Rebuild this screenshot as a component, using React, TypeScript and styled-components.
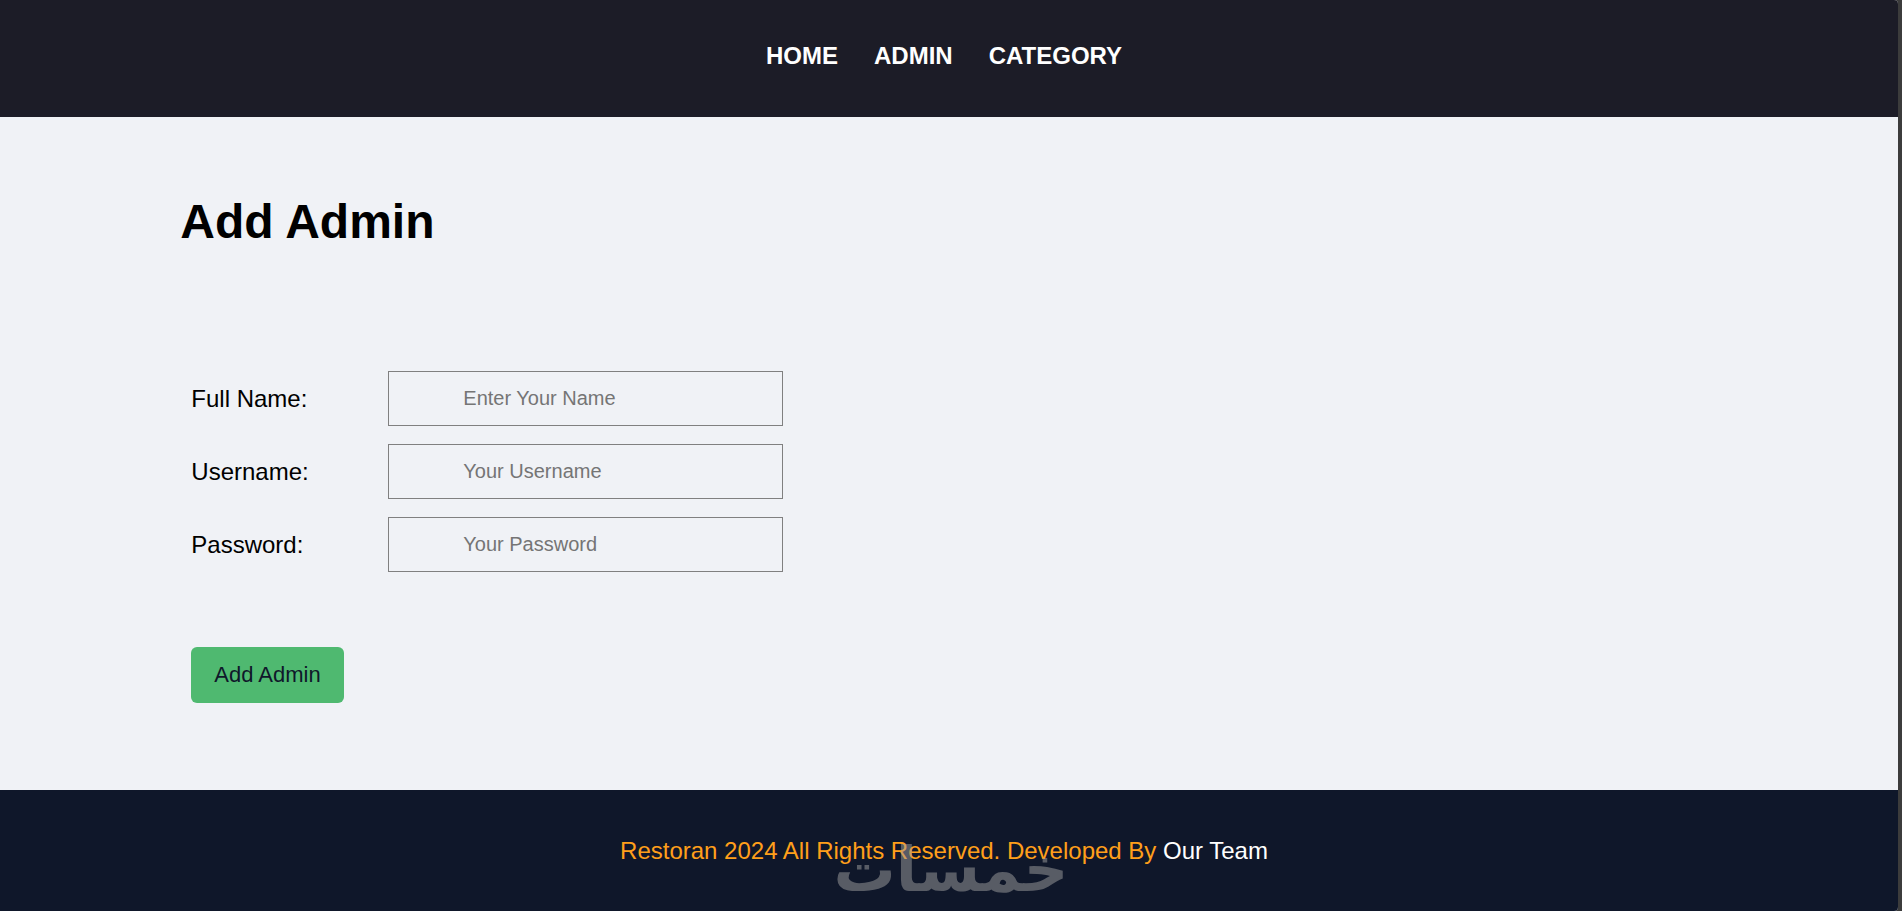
import React from "react";
import styled, { createGlobalStyle } from "styled-components";

const GlobalStyle = createGlobalStyle`
  * { box-sizing: border-box; }
  html, body { margin: 0; }
  body {
    background: #3c3c3c;
    color: #000;
    font-family: "Liberation Sans", Arial, sans-serif;
    font-size: 24px;
    line-height: 28px;
  }
`;

const Frame = styled.div`
  display: flex;
  flex-direction: column;
  min-height: 100vh;
  margin-right: 4px;
  background: #f0f2f6;
  border-radius: 0 4px 4px 0;
  overflow: hidden;
`;

const Header = styled.header`
  padding: 42px 10px 47px 0;
  background: #1c1c27;
`;

const NavList = styled.ul`
  display: flex;
  justify-content: center;
  gap: 36px;
  margin: 0;
  padding: 0;
  list-style: none;
`;

const NavLink = styled.a`
  color: #fff;
  font-weight: bold;
  text-decoration: none;
`;

const Main = styled.main`
  flex: 1;
  width: 81%;
  margin: 0 auto;
  padding: 77px 0 86px;
`;

const Title = styled.h1`
  margin: 0;
  font-size: 48px;
  line-height: 56px;
`;

const Form = styled.form`
  display: flex;
  flex-direction: column;
  align-items: flex-start;
  gap: 18px;
  padding: 121px 11px 0;
`;

const Field = styled.div`
  display: grid;
  grid-template-columns: 197px 395px;
  align-items: center;
`;

const Input = styled.input`
  height: 55px;
  padding: 0 74px;
  border: 1px solid #808080;
  border-radius: 0;
  background: transparent;
  font: 20px "Liberation Sans", Arial, sans-serif;

  &::placeholder { color: #757575; opacity: 1; }
`;

const SubmitButton = styled.button`
  height: 56px;
  margin-top: 57px;
  padding: 0 23px;
  border: 0;
  border-radius: 6px;
  background: #4fb970;
  color: #0f172a;
  font: 22px "Liberation Sans", Arial, sans-serif;
`;

const Footer = styled.footer`
  position: relative;
  padding: 47px 10px 46px 0;
  background: #0f172a;
  color: #ff9f1a;
  text-align: center;
`;

const Credit = styled.p`
  margin: 0;
`;

const TeamLink = styled.a`
  color: #fff;
  text-decoration: none;
`;

const Watermark = styled.span`
  position: absolute;
  right: 0;
  bottom: 10px;
  left: 4px;
  color: #a0a0a0;
  font: bold 62px/62px "DejaVu Sans", sans-serif;
  opacity: 0.5;
  pointer-events: none;
`;

const links = ["Home", "Admin", "Category"];

const fields = [
  { id: "full_name", label: "Full Name:", type: "text", placeholder: "Enter Your Name" },
  { id: "username", label: "Username:", type: "text", placeholder: "Your Username" },
  { id: "password", label: "Password:", type: "password", placeholder: "Your Password" },
];

export default function App() {
  return (
    <>
      <GlobalStyle />
      <Frame>
        <Header>
          <nav>
            <NavList>
              {links.map((name) => (
                <li key={name}>
                  <NavLink href={`#${name.toLowerCase()}`}>{name.toUpperCase()}</NavLink>
                </li>
              ))}
            </NavList>
          </nav>
        </Header>
        <Main>
          <Title>Add Admin</Title>
          <Form onSubmit={(event: React.FormEvent) => event.preventDefault()}>
            {fields.map(({ id, label, type, placeholder }) => (
              <Field key={id}>
                <label htmlFor={id}>{label}</label>
                <Input id={id} name={id} type={type} placeholder={placeholder} />
              </Field>
            ))}
            <SubmitButton type="submit">Add Admin</SubmitButton>
          </Form>
        </Main>
        <Footer>
          <Credit>
            Restoran 2024 All Rights Reserved. Developed By <TeamLink href="#team">Our Team</TeamLink>
          </Credit>
          <Watermark lang="ar">خمسات</Watermark>
        </Footer>
      </Frame>
    </>
  );
}
